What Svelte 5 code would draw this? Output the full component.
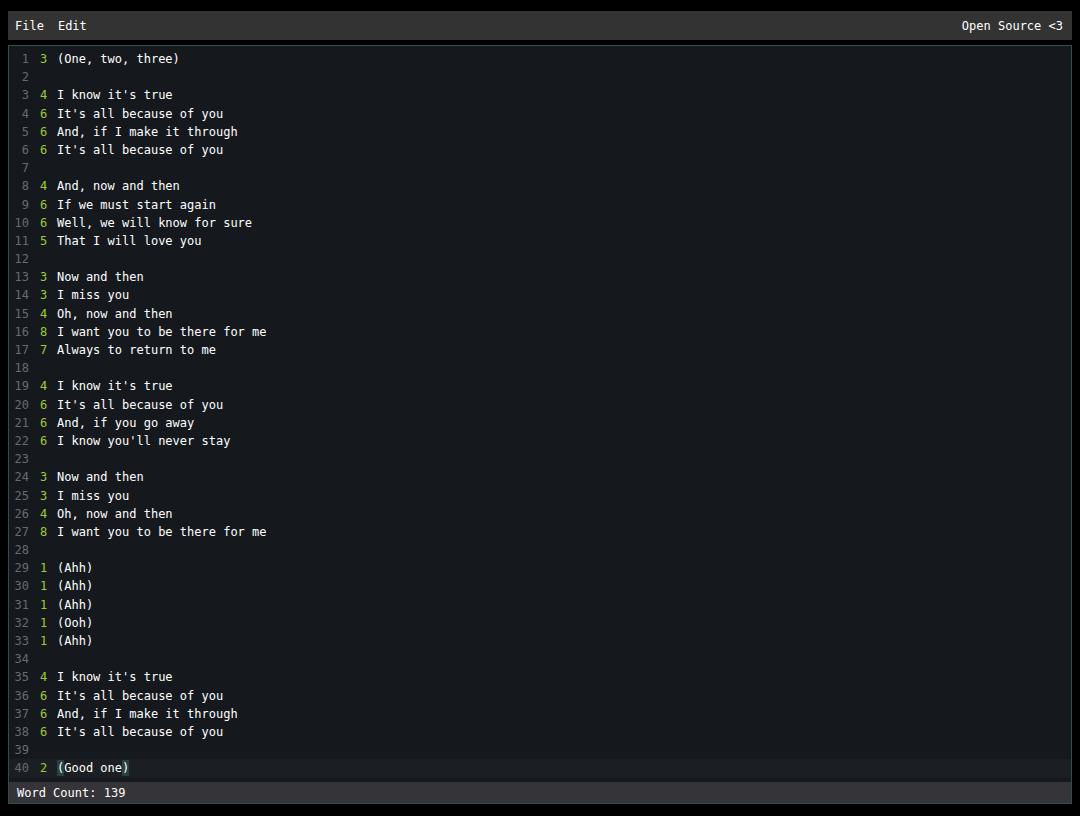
<script>
  const lyrics = [
    [3, '(One, two, three)'],
    [0, ''],
    [4, "I know it's true"],
    [6, "It's all because of you"],
    [6, 'And, if I make it through'],
    [6, "It's all because of you"],
    [0, ''],
    [4, 'And, now and then'],
    [6, 'If we must start again'],
    [6, 'Well, we will know for sure'],
    [5, 'That I will love you'],
    [0, ''],
    [3, 'Now and then'],
    [3, 'I miss you'],
    [4, 'Oh, now and then'],
    [8, 'I want you to be there for me'],
    [7, 'Always to return to me'],
    [0, ''],
    [4, "I know it's true"],
    [6, "It's all because of you"],
    [6, 'And, if you go away'],
    [6, "I know you'll never stay"],
    [0, ''],
    [3, 'Now and then'],
    [3, 'I miss you'],
    [4, 'Oh, now and then'],
    [8, 'I want you to be there for me'],
    [0, ''],
    [1, '(Ahh)'],
    [1, '(Ahh)'],
    [1, '(Ahh)'],
    [1, '(Ooh)'],
    [1, '(Ahh)'],
    [0, ''],
    [4, "I know it's true"],
    [6, "It's all because of you"],
    [6, 'And, if I make it through'],
    [6, "It's all because of you"],
    [0, ''],
    [2, '(Good one)']
  ];
  const active = lyrics.length - 1;
  const wordCount = 139;
</script>

<div class="app">
  <header>
    <nav>
      <button type="button">File</button>
      <button type="button">Edit</button>
    </nav>
    <a href="#source">Open Source &lt;3</a>
  </header>

  <main>
    <div class="editor">
      <div class="column numbers" aria-hidden="true">
        {#each lyrics as _, i}
          <div class="line" class:active={i === active}>{i + 1}</div>
        {/each}
      </div>
      <div class="column counts" aria-hidden="true">
        {#each lyrics as [count], i}
          <div class="line" class:active={i === active}>{count || ''}</div>
        {/each}
      </div>
      <div class="column content" contenteditable="true" role="textbox" tabindex="0" aria-multiline="true" aria-label="Lyrics" spellcheck="false">
        {#each lyrics as [, text], i}
          <div class="line" class:active={i === active}>{#if i === active}<span class="bracket">{text.slice(0, 1)}</span>{text.slice(1, -1)}<span class="bracket">{text.slice(-1)}</span>{:else}{text}{/if}</div>
        {/each}
      </div>
    </div>
    <footer>Word Count: {wordCount}</footer>
  </main>
</div>

<style>
  :global(body) {
    background: #000;
  }

  .app {
    padding: 11px 8px;
    color: #fff;
    font-family: "DejaVu Sans Mono", monospace;
    font-size: 12px;
  }

  header {
    display: flex;
    justify-content: space-between;
    align-items: center;
    height: 29px;
    margin-bottom: 5px;
    padding: 0 9px 0 7px;
    background: #333;
  }

  nav {
    display: flex;
    gap: 14px;
  }

  button {
    padding: 0;
    border: 0;
    background: none;
    color: inherit;
    font: inherit;
    cursor: pointer;
  }

  a {
    color: inherit;
    text-decoration: none;
  }

  main {
    border: 1px solid #2f4f4f;
    background: #15191e;
  }

  .editor {
    display: flex;
    padding: 4px 0;
    font-size: 13px;
    line-height: 1.4em;
  }

  .column {
    display: grid;
    flex: none;
    grid-auto-rows: 1.4em;
  }

  .line {
    font-size: 12px;
    white-space: pre;
  }

  .numbers {
    width: 26px;
    color: #676b6e;
    text-align: right;
  }

  .numbers .line {
    padding-right: 6px;
  }

  .counts {
    width: 22px;
    color: #9acd32;
  }

  .counts .line {
    padding-left: 5px;
  }

  .content {
    flex: 1;
    min-width: 0;
    outline: 0;
  }

  .active {
    background: #1b1f23;
  }

  .bracket {
    padding: 1px 0;
    background: #244242;
  }

  footer {
    padding: 1px 8px 0;
    background: #353439;
    line-height: 20px;
  }
</style>
